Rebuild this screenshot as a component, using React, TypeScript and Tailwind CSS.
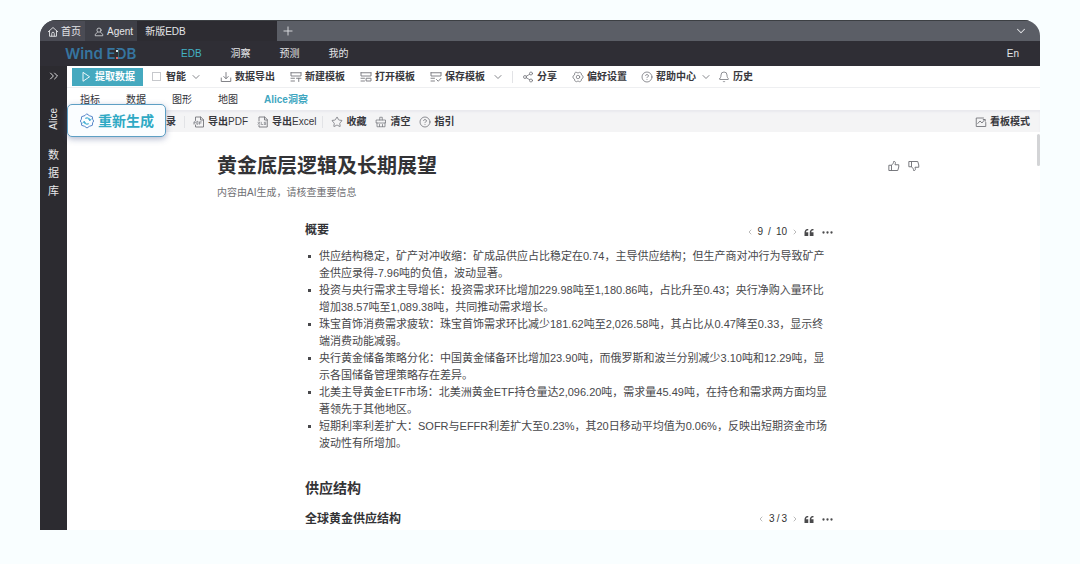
import React from "react";
import { Bell, ChevronDown, ChevronLeft, ChevronRight, ChevronsRight, CircleHelp, Plus, Share2, Star } from "lucide-react";

type IconProps = { children: React.ReactNode; className?: string };

function Glyph({ children, className = "size-3" }: IconProps) {
  return (
    <svg
      viewBox="0 0 24 24"
      fill="none"
      stroke="currentColor"
      strokeWidth="1.8"
      strokeLinecap="round"
      strokeLinejoin="round"
      aria-hidden="true"
      className={`shrink-0 ${className}`}
    >
      {children}
    </svg>
  );
}

const HomeIcon = () => (
  <Glyph>
    <path d="M2.500 11.500 12 3l9.500 8.500M5 10v10.500h14V10" />
    <path d="M9.500 20v-5a2.500 2.500 0 0 1 5 0v5" />
  </Glyph>
);

const AgentIcon = () => (
  <Glyph className="size-2.5">
    <circle cx="12" cy="7.500" r="5" />
    <path d="M8.500 12.500 3 17.500V21h18v-3.500l-5.500-5" />
  </Glyph>
);

const PlayIcon = () => (
  <Glyph>
    <path d="M6 3.500v17L18.500 12z" />
  </Glyph>
);

const ExportIcon = () => (
  <Glyph>
    <path d="M12 3v12M7.500 11l4.500 4.500 4.500-4.500M2.500 14v7h19v-7" />
  </Glyph>
);

const TemplateIcon = ({ kind }: { kind: "new" | "open" | "save" }) => (
  <Glyph>
    <path d="M2 3.500h20M2 3.500v6.500h20V3.500M2 14.500h7M2 20h7" />
    {kind === "new" && <path d="M13 14.500h9M17.500 14.500V21" />}
    {kind === "open" && <path d="M13 14.500h9V20h-9z" />}
    {kind === "save" && <path d="m13 17 3.500 3.500L22 14.500" />}
  </Glyph>
);

const PreferenceIcon = () => (
  <Glyph>
    <path d="m8.500 2.500 3.500 1.500 3.500-1.500 3 2 .5 3.500 3 2v4l-3 2-.5 3.500-3 2L12 20l-3.500 1.500-3-2L5 16l-3-2v-4l3-2 .5-3.500z" strokeWidth="1.500" />
    <circle cx="12" cy="12" r="3.500" strokeWidth="1.500" />
  </Glyph>
);

const PdfIcon = () => (
  <Glyph>
    <path d="M5 9V2h10.500L21 7.500V22H5v-4M15 2v6h6" />
    <path d="M2 16.500v-5h2.500v2.500H2M7.500 11.500v5h2.500v-5zM13 16.500v-5h3.500M13 14h3" strokeWidth="1.300" />
  </Glyph>
);

const ExcelIcon = () => (
  <Glyph>
    <path d="M4 10V2h11.500L20.500 7v15H4v-3M15 2v6h5.500" />
    <path d="m2 12.500 3.500 4.500m0-4.500L2 17M8.500 12.500V17h3M17.500 12.500h-3v2.200h3V17h-3" strokeWidth="1.300" />
  </Glyph>
);

const ClearIcon = () => (
  <Glyph>
    <path d="M9.500 8V2.500h5V8M3 8h18v6H3zM4 14v7.500h16V14M9 21v-4M15 21v-4" strokeWidth="1.500" />
  </Glyph>
);

const BoardIcon = () => (
  <Glyph>
    <path d="M21.500 13v8h-19V4H17M5.500 15l4.500-5 4 4 5.500-7M16.500 7h4v3.500" />
  </Glyph>
);

const RegenerateIcon = () => (
  <Glyph className="size-4">
    <path
      d="M12 1.500 15.500 4l4.500 1.500.5 4 1.500 2.500-1.500 2.500-.5 4-4.500 1.500-3.500 2.500L8.500 20 4 18.500l-.5-4L2 12l1.500-2.500.5-4L8.500 4z"
      stroke="#5585c8"
      strokeWidth="1.500"
    />
    <path d="M7.500 13.500a4.700 4.700 0 0 0 6.500 2.700M16.500 10.500A4.700 4.700 0 0 0 10 7.800" stroke="#35a9cf" strokeWidth="1.600" />
    <path d="m5.800 15 1.700-2.500 2.200 2M18.200 9l-1.700 2.500-2.200-2" stroke="#35a9cf" strokeWidth="1.400" />
  </Glyph>
);

const ThumbIcon = ({ down = false }: { down?: boolean }) => (
  <Glyph className={down ? "size-3 -scale-y-100" : "size-3"}>
    <path d="M2.500 10.500H7V21H2.500zM7 10.500c3-2 4-4.500 4.200-7.500 2.500-.5 4 1 3.500 3.500L14 9.500h7.500V14l-2 7H7" />
  </Glyph>
);

const QuoteIcon = () => (
  <svg viewBox="0 0 20 14" className="h-[7px] w-2.5 shrink-0" fill="#4a4a4c" aria-hidden="true">
    <path d="M8.500 0H6C2.500 1 1 4 1 7.500V14h7.500V6.500H4C4 4 5.500 2.500 8.500 2.300z" />
    <path d="M19 0h-2.500c-3.500 1-5 4-5 7.500V14H19V6.500h-4.500c0-2.500 1.500-4 4.500-4.200z" />
  </svg>
);

const DotsIcon = () => (
  <svg viewBox="0 0 22 6" className="h-[3px] w-[11px] shrink-0" fill="#4a4a4c" aria-hidden="true">
    <circle cx="3" cy="3" r="2.300" />
    <circle cx="11" cy="3" r="2.300" />
    <circle cx="19" cy="3" r="2.300" />
  </svg>
);

type ToolProps = { icon: React.ReactNode; label: string; latin?: string; children?: React.ReactNode };

function Tool({ icon, label, latin, children }: ToolProps) {
  return (
    <button type="button" className="flex shrink-0 items-center gap-[3px] whitespace-nowrap text-[#38383d]">
      <span className="text-[#74757b]">{icon}</span>
      <span>
        <span className="font-bold">{label}</span>
        {latin}
      </span>
      {children}
    </button>
  );
}

const Divider = () => <span className="h-3 w-px shrink-0 bg-[#e2e3e6]" />;

const Caret = () => <ChevronDown className="ml-1 size-3 text-[#66676d]" strokeWidth={1.6} />;

function Pager({ page, total, spread = false }: { page: number; total: number; spread?: boolean }) {
  return (
    <div className="flex items-center text-[#333]">
      <button type="button" aria-label="上一页">
        <ChevronLeft className="size-2 text-[#999]" />
      </button>
      <span className={spread ? "flex gap-[5px] px-1" : "flex gap-0.5 px-1"}>
        <span>{page}</span>
        <span>/</span>
        <span>{total}</span>
      </span>
      <button type="button" aria-label="下一页">
        <ChevronRight className="size-2 text-[#999]" />
      </button>
      <button type="button" aria-label="引用" className="ml-[5px]">
        <QuoteIcon />
      </button>
      <button type="button" aria-label="更多" className="ml-2">
        <DotsIcon />
      </button>
    </div>
  );
}

const summary = [
  "供应结构稳定，矿产对冲收缩：矿成品供应占比稳定在0.74，主导供应结构；但生产商对冲行为导致矿产金供应录得-7.96吨的负值，波动显著。",
  "投资与央行需求主导增长：投资需求环比增加229.98吨至1,180.86吨，占比升至0.43；央行净购入量环比增加38.57吨至1,089.38吨，共同推动需求增长。",
  "珠宝首饰消费需求疲软：珠宝首饰需求环比减少181.62吨至2,026.58吨，其占比从0.47降至0.33，显示终端消费动能减弱。",
  "央行黄金储备策略分化：中国黄金储备环比增加23.90吨，而俄罗斯和波兰分别减少3.10吨和12.29吨，显示各国储备管理策略存在差异。",
  "北美主导黄金ETF市场：北美洲黄金ETF持仓量达2,096.20吨，需求量45.49吨，在持仓和需求两方面均显著领先于其他地区。",
  "短期利率利差扩大：SOFR与EFFR利差扩大至0.23%，其20日移动平均值为0.06%，反映出短期资金市场波动性有所增加。",
];

export default function App() {
  return (
    <div
      lang="zh-CN"
      className="flex min-h-screen flex-col bg-[#f9feff] px-10 pt-5 pb-[34px] font-['Liberation_Sans','Noto_Sans_CJK_SC',sans-serif] text-[10px] leading-4"
    >
      <div className="flex flex-1 flex-col overflow-hidden rounded-t-[16px] bg-white">
        <header className="text-[#e4e5e8]">
          <div className="flex h-[21px] items-stretch border-t border-[#3c3f43] bg-[#5b5e66]">
            <a href="#home" className="flex items-center gap-0.5 bg-[#4a4b54] pt-px pr-1 pl-[7px]">
              <HomeIcon />
              首页
            </a>
            <a href="#agent" className="flex items-center gap-[3px] bg-[#3e3f47] pt-px pr-1 pl-[9px]">
              <AgentIcon />
              Agent
            </a>
            <a href="#edb" className="flex w-[140px] items-center bg-[#2d2c32] pt-px pl-2">
              新版EDB
            </a>
            <button type="button" aria-label="新建标签" className="px-1">
              <Plus className="size-3.5" strokeWidth={1.5} />
            </button>
            <button type="button" aria-label="展开" className="ml-auto pr-3">
              <ChevronDown className="size-3.5" strokeWidth={1.8} />
            </button>
          </div>
          <nav className="flex h-[25px] items-center bg-[#2f2e35] pr-[21px] pl-[25px]">
            <span className="relative w-[116px] font-['Inter',sans-serif] text-[15px] font-semibold text-[#36759f]">
              Wind EDB
              <svg viewBox="0 0 4 12" className="absolute top-[2px] left-[50px] h-3 w-1" aria-hidden="true">
                <rect x="0" y="1" width="3" height="10" fill="#2f2e35" />
                <rect x="1" y="2" width="2" height="2" fill="#d8e6ee" />
                <rect x="1" y="9" width="2" height="2" fill="#e06a6a" />
              </svg>
            </span>
            <div className="flex gap-[29px]">
              <a href="#edb" className="text-[#43b2c4]">EDB</a>
              <a href="#insight">洞察</a>
              <a href="#forecast">预测</a>
              <a href="#mine">我的</a>
            </div>
            <a href="#en" className="ml-auto">En</a>
          </nav>
        </header>

        <div className="flex flex-1">
          <aside className="flex w-[27px] shrink-0 flex-col items-center bg-[#2c2b30] pt-[3px] text-[#e8e8ea]">
            <button type="button" aria-label="展开侧栏">
              <ChevronsRight className="size-3.5" strokeWidth={1.6} />
            </button>
            <a href="#alice" className="mt-[25px] rotate-180 [writing-mode:vertical-rl]">
              Alice
            </a>
            <a href="#database" className="mt-4 flex flex-col items-center text-[11px] leading-[18px]">
              <span>数</span>
              <span>据</span>
              <span>库</span>
            </a>
          </aside>

          <div className="relative flex min-w-0 flex-1 flex-col">
            <div className="flex h-[22px] items-center border-b border-[#eeeff1] pl-[5px]">
              <button
                type="button"
                className="flex h-[18px] w-[71px] shrink-0 items-center justify-center gap-[3px] bg-[#45a9bf] font-bold text-white"
              >
                <PlayIcon />
                提取数据
              </button>
              <label className="ml-[9px] flex shrink-0 items-center gap-[5px] font-bold text-[#38383d]">
                <input type="checkbox" className="size-[9px] appearance-none border border-[#c6c8cc] bg-white" />
                智能
              </label>
              <Caret />
              <div className="ml-[18px] flex items-center gap-[15px]">
                <Tool icon={<ExportIcon />} label="数据导出" />
                <Tool icon={<TemplateIcon kind="new" />} label="新建模板" />
                <Tool icon={<TemplateIcon kind="open" />} label="打开模板" />
                <Tool icon={<TemplateIcon kind="save" />} label="保存模板">
                  <Caret />
                </Tool>
              </div>
              <div className="ml-2 flex items-center gap-[9px]">
                <Divider />
                <Tool icon={<Share2 className="size-3" strokeWidth={1.6} />} label="分享" />
              </div>
              <div className="ml-[15px] flex items-center gap-[14px]">
                <Tool icon={<PreferenceIcon />} label="偏好设置" />
                <Tool icon={<CircleHelp className="size-3" strokeWidth={1.6} />} label="帮助中心" />
              </div>
              <Caret />
              <div className="ml-[6px]">
                <Tool icon={<Bell className="size-3" strokeWidth={1.6} />} label="历史" />
              </div>
            </div>

            <nav className="flex h-[22px] items-center gap-[26px] pt-0.5 pl-[13px] text-[#333338]">
              <a href="#indicator">指标</a>
              <a href="#data">数据</a>
              <a href="#chart">图形</a>
              <a href="#map">地图</a>
              <a href="#alice-insight" className="font-bold text-[#3ea6bf]">
                Alice洞察
              </a>
            </nav>

            <div className="flex h-[22px] items-center bg-[#f4f4f5] pt-0.5 pr-[10px] pl-[89px] shadow-[inset_0_2px_2px_#e9e9ee]">
              <button type="button" className="mr-2 font-bold text-[#38383d]">目录</button>
              <Divider />
              <div className="mr-[6px] ml-2 flex items-center gap-[9px]">
                <Tool icon={<PdfIcon />} label="导出" latin="PDF" />
                <Tool icon={<ExcelIcon />} label="导出" latin="Excel" />
              </div>
              <Divider />
              <div className="ml-2 flex items-center gap-[9px]">
                <Tool icon={<Star className="size-3" strokeWidth={1.6} />} label="收藏" />
                <Tool icon={<ClearIcon />} label="清空" />
                <Tool icon={<CircleHelp className="size-3" strokeWidth={1.6} />} label="指引" />
              </div>
              <div className="ml-auto">
                <Tool icon={<BoardIcon />} label="看板模式" />
              </div>
            </div>

            <button
              type="button"
              className="absolute top-[38px] left-0 flex h-[33px] w-[99px] items-center justify-center gap-[3px] rounded-[5px] border border-[#5d9fc4] bg-[#fafdff] text-[14px] font-bold text-[#2fa9c4] shadow-[0_2px_6px_#50609070]"
            >
              <RegenerateIcon />
              重新生成
            </button>

            <main className="relative flex-1 pt-[19px] pr-[120px] pl-[150px] text-[#333336]">
              <span className="absolute top-0.5 right-0 h-8 w-[3px] rounded-sm bg-[#d3d4d6]" />
              <div className="flex items-center justify-between">
                <h1 className="text-[20px] leading-[30px] font-bold">黄金底层逻辑及长期展望</h1>
                <div className="flex gap-2 text-[#6a6b70]">
                  <button type="button" aria-label="赞">
                    <ThumbIcon />
                  </button>
                  <button type="button" aria-label="踩">
                    <ThumbIcon down />
                  </button>
                </div>
              </div>
              <p className="mt-1 text-[#707074]">内容由AI生成，请核查重要信息</p>

              <div className="pr-[87px] pl-[88px]">
                <section>
                  <div className="mt-[19px] flex items-end justify-between">
                    <h2 className="text-[12px] leading-5 font-bold">概要</h2>
                    <Pager page={9} total={10} spread />
                  </div>
                  <ul className="mt-2 pr-1 text-[11px] leading-[17px] text-[#48484b]">
                    {summary.map((item) => (
                      <li key={item} className="flex gap-2 pl-[3px]">
                        <span className="mt-[7px] size-[3px] shrink-0 bg-[#48484b]" />
                        <span>{item}</span>
                      </li>
                    ))}
                  </ul>
                </section>
                <section>
                  <h2 className="mt-[26px] text-[14px] leading-5 font-bold">供应结构</h2>
                  <div className="mt-3 flex items-center justify-between">
                    <h3 className="text-[12px] leading-[18px] font-bold">全球黄金供应结构</h3>
                    <Pager page={3} total={3} />
                  </div>
                </section>
              </div>
            </main>
          </div>
        </div>
      </div>
    </div>
  );
}
